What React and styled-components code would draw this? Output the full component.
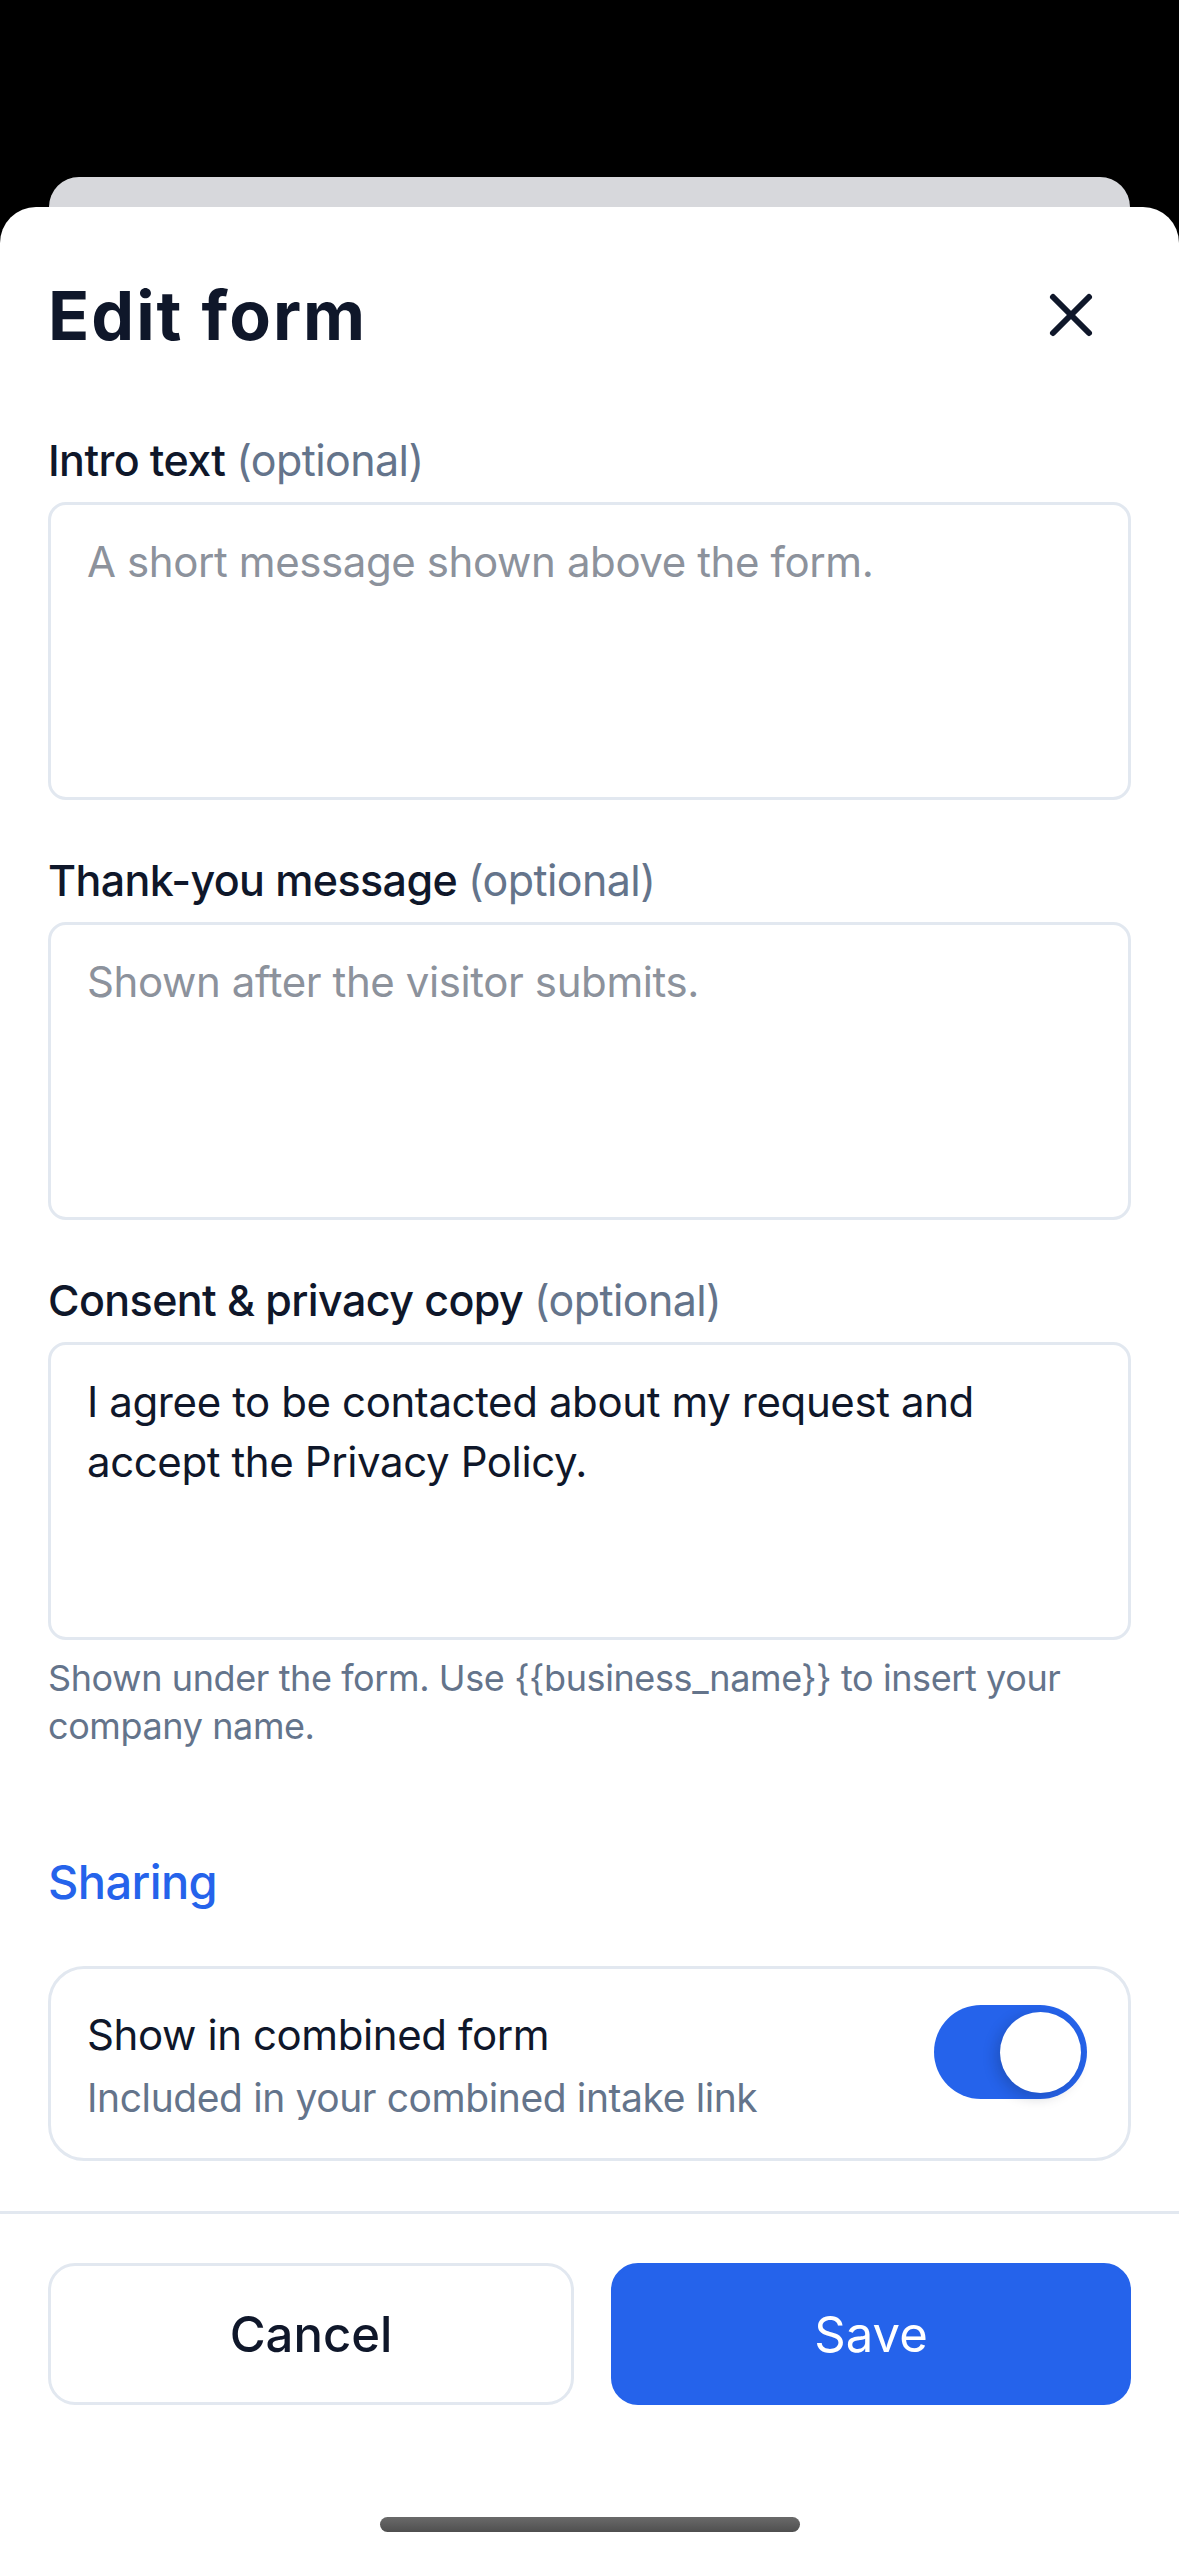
import React, { useState } from 'react';
import styled, { createGlobalStyle } from 'styled-components';
import { X } from 'lucide-react';

// the screen is 393pt wide rendered at 3x, so all values below are device pixels
const colors = {
  ink: '#0f172a',
  muted: '#64748b',
  placeholder: '#8c929c',
  line: '#e2e8f0',
  blue: '#2563eb',
  backSheet: '#d7d8dc',
};

const GlobalStyle = createGlobalStyle`
  html, body {
    margin: 0;
    padding: 0;
    background: #000;
  }
  body {
    font-family: Inter, "Noto Sans", sans-serif;
    -webkit-font-smoothing: antialiased;
  }
  * {
    box-sizing: border-box;
  }
`;

const Screen = styled.div`
  height: 2556px;
  padding-top: 177px;
  background: #000;
  display: flex;
  flex-direction: column;
  overflow: hidden;
`;

const BackSheet = styled.div`
  height: 30px;
  margin: 0 49px;
  background: ${colors.backSheet};
  border-radius: 30px 30px 0 0;
  flex-shrink: 0;
`;

const Sheet = styled.div`
  position: relative;
  flex: 1;
  display: flex;
  flex-direction: column;
  background: #fff;
  border-radius: 36px 36px 0 0;
`;

const Body = styled.div`
  flex: 1;
  padding: 60px 48px 0;
`;

const Header = styled.div`
  display: flex;
  align-items: center;
  justify-content: space-between;
  min-height: 96px;
  margin-bottom: 67px;
`;

const Title = styled.h1`
  margin: 0;
  font-size: 68px;
  line-height: 96px;
  font-weight: 700;
  letter-spacing: 2px;
  color: ${colors.ink};
`;

const CloseButton = styled.button`
  width: 120px;
  height: 120px;
  margin: -12px 0;
  padding: 0;
  border: 0;
  background: transparent;
  display: flex;
  align-items: center;
  justify-content: center;
  color: ${colors.ink};
  cursor: pointer;
`;

const Field = styled.div`
  display: flex;
  flex-direction: column;
  margin-bottom: ${(p) => p.$gap ?? 50}px;
`;

const Label = styled.label`
  font-size: 43px;
  line-height: 60px;
  font-weight: 500;
  letter-spacing: -0.6px;
  color: ${colors.ink};
  margin-bottom: 12px;
`;

const Optional = styled.span`
  font-weight: 400;
  color: ${colors.muted};
`;

const TextArea = styled.textarea`
  display: block;
  width: 100%;
  height: 298px;
  margin: 0;
  padding: 27px 36px;
  border: 3px solid ${colors.line};
  border-radius: 18px;
  resize: none;
  outline: none;
  font-family: inherit;
  font-size: 42px;
  line-height: 60px;
  letter-spacing: -0.4px;
  color: ${colors.ink};
  background: #fff;

  &::placeholder {
    color: ${colors.placeholder};
    opacity: 1;
  }
`;

const Hint = styled.p`
  margin: 14px 0 0;
  font-size: 36px;
  line-height: 48px;
  letter-spacing: -0.4px;
  color: ${colors.muted};
`;

const SectionTitle = styled.h2`
  margin: 96px 0 48px;
  font-size: 47px;
  line-height: 72px;
  font-weight: 500;
  letter-spacing: -0.6px;
  color: ${colors.blue};
`;

const OptionCard = styled.div`
  display: flex;
  align-items: flex-start;
  justify-content: space-between;
  gap: 36px;
  padding: 36px 41px 33px 36px;
  border: 3px solid ${colors.line};
  border-radius: 36px;
`;

const OptionText = styled.div`
  display: flex;
  flex-direction: column;
  gap: 6px;
`;

const OptionTitle = styled.span`
  font-size: 42px;
  line-height: 60px;
  letter-spacing: -0.4px;
  color: ${colors.ink};
`;

const OptionSub = styled.span`
  font-size: 39px;
  line-height: 54px;
  letter-spacing: -0.4px;
  color: ${colors.muted};
`;

const Switch = styled.button`
  flex-shrink: 0;
  width: 153px;
  height: 94px;
  padding: 6px;
  border: 0;
  border-radius: 47px;
  display: flex;
  align-items: center;
  justify-content: ${(p) => (p.$on ? 'flex-end' : 'flex-start')};
  background: ${(p) => (p.$on ? colors.blue : '#e5e7eb')};
  cursor: pointer;
`;

const Knob = styled.span`
  width: 81px;
  height: 81px;
  border-radius: 50%;
  background: #fff;
  box-shadow: -4px 4px 14px rgba(15, 23, 42, 0.22);
`;

const Footer = styled.div`
  display: flex;
  gap: 37px;
  padding: 49px 48px 151px;
  border-top: 3px solid ${colors.line};
`;

const Button = styled.button`
  flex: ${(p) => (p.$primary ? '1' : '1.012')};
  height: 142px;
  border-radius: 27px;
  font-family: inherit;
  font-size: 49px;
  font-weight: ${(p) => (p.$primary ? 400 : 500)};
  cursor: pointer;
  border: 3px solid ${(p) => (p.$primary ? colors.blue : colors.line)};
  background: ${(p) => (p.$primary ? colors.blue : '#fff')};
  color: ${(p) => (p.$primary ? '#fff' : colors.ink)};
`;

const HomeIndicator = styled.div`
  position: absolute;
  left: 50%;
  bottom: 24px;
  width: 420px;
  height: 15px;
  margin-left: -210px;
  border-radius: 8px;
  background: linear-gradient(180deg, #6a6a6a, #4f4f4f);
`;

const fields = [
  {
    id: 'intro',
    label: 'Intro text',
    placeholder: 'A short message shown above the form.',
  },
  {
    id: 'thanks',
    label: 'Thank-you message',
    placeholder: 'Shown after the visitor submits.',
  },
];

const hintText =
  'Shown under the form. Use {{business_name}} to insert your company name.';

export default function App() {
  const [combined, setCombined] = useState(true);
  const [consent, setConsent] = useState(
    'I agree to be contacted about my request and accept the Privacy Policy.'
  );

  return (
    <>
      <GlobalStyle />
      <Screen>
        <BackSheet />
        <Sheet>
          <Body>
            <Header>
              <Title>Edit form</Title>
              <CloseButton aria-label="Close">
                <X size={72} strokeWidth={2} />
              </CloseButton>
            </Header>

            {fields.map((f) => (
              <Field key={f.id}>
                <Label htmlFor={f.id}>
                  {f.label} <Optional>(optional)</Optional>
                </Label>
                <TextArea id={f.id} placeholder={f.placeholder} />
              </Field>
            ))}

            <Field $gap={0}>
              <Label htmlFor="consent">
                Consent &amp; privacy copy <Optional>(optional)</Optional>
              </Label>
              <TextArea
                id="consent"
                value={consent}
                onChange={(e) => setConsent(e.target.value)}
              />
              <Hint>{hintText}</Hint>
            </Field>

            <SectionTitle>Sharing</SectionTitle>

            <OptionCard>
              <OptionText>
                <OptionTitle>Show in combined form</OptionTitle>
                <OptionSub>Included in your combined intake link</OptionSub>
              </OptionText>
              <Switch
                role="switch"
                aria-checked={combined}
                $on={combined}
                onClick={() => setCombined((v) => !v)}
              >
                <Knob />
              </Switch>
            </OptionCard>
          </Body>

          <Footer>
            <Button>Cancel</Button>
            <Button $primary>Save</Button>
          </Footer>
          <HomeIndicator />
        </Sheet>
      </Screen>
    </>
  );
}
